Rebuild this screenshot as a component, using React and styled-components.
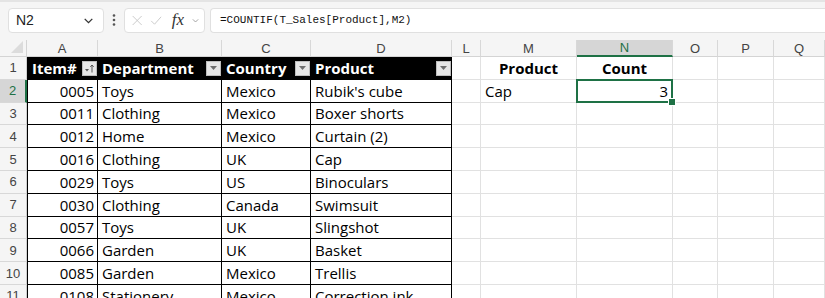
import styled, { createGlobalStyle } from "styled-components";

const GlobalStyle = createGlobalStyle`
  html, body { margin: 0; padding: 0; background: #fff; }
  body { font-family: "Open Sans", "Liberation Sans", sans-serif; overflow: hidden; }
`;

const GREEN = "#1e7145";

const Page = styled.div`
  width: 825px;
  height: 298px;
  overflow: hidden;
  background: #fff;
`;

const Toolbar = styled.div`
  height: 40px;
  box-sizing: border-box;
  background: #f5f5f5;
  border-top: 2px solid #e4e4e4;
  display: flex;
  align-items: center;
  padding: 0 0 2px 8px;
  gap: 5px;
`;

const Box = styled.div`
  height: 25px;
  box-sizing: border-box;
  background: #fff;
  border: 1px solid #e0e0e0;
  border-radius: 4px;
  display: flex;
  align-items: center;
`;

const NameBox = styled(Box)`
  width: 96px;
  padding: 0 8px 0 7px;
  justify-content: space-between;
  font-family: "Liberation Sans", sans-serif;
  font-size: 14px;
  color: #222;
`;

const Dots = styled.div`
  width: 10px;
  display: flex;
  justify-content: center;
  color: #555;
`;

const FxBox = styled(Box)`
  width: 81px;
  padding: 0 4px 0 6px;
  gap: 7px;
  color: #c6c6c6;
`;

const Fx = styled.span`
  font-family: "Liberation Serif", serif;
  font-style: italic;
  font-size: 17px;
  color: #333;
  margin-left: 2px;
`;

const FormulaBox = styled(Box)`
  flex: 1;
  border-right: none;
  border-radius: 4px 0 0 4px;
  padding-left: 9px;
  font-family: "Liberation Mono", monospace;
  font-size: 11px;
  color: #111;
`;

const Sheet = styled.div`
  display: grid;
  grid-template-columns: 27px 71px 124px 89px 141px 29px 96px 96px 45px 56px 51px;
  grid-template-rows: 17px repeat(11, 22.8px);
  font-size: 15px;
  color: #000;
`;

const Corner = styled.div`
  background: #f5f5f5;
  border-right: 1px solid #d4d4d4;
  border-bottom: 1px solid #d4d4d4;
  position: relative;
  &::after {
    content: "";
    position: absolute;
    right: 3px;
    bottom: 3px;
    border-left: 12px solid transparent;
    border-bottom: 12px solid #dcdcdc;
  }
`;

const ColHead = styled.div`
  background: ${(p) => (p.$active ? "#d6d6d6" : "#f5f5f5")};
  color: ${(p) => (p.$active ? GREEN : "#444")};
  border-right: 1px solid #d8d8d8;
  border-bottom: ${(p) => (p.$active ? `2px solid ${GREEN}` : "1px solid #d4d4d4")};
  box-sizing: border-box;
  font-family: "Liberation Sans", sans-serif;
  font-size: 13px;
  display: flex;
  align-items: center;
  justify-content: center;
`;

const RowHead = styled.div`
  background: ${(p) => (p.$active ? "#d6d6d6" : "#f5f5f5")};
  color: ${(p) => (p.$active ? GREEN : "#444")};
  border-right: ${(p) => (p.$active ? `2px solid ${GREEN}` : "1px solid #cfcfcf")};
  border-bottom: 1px solid #d8d8d8;
  box-sizing: border-box;
  font-family: "Liberation Sans", sans-serif;
  font-size: 13px;
  display: flex;
  align-items: center;
  justify-content: center;
`;

const Cell = styled.div`
  box-sizing: border-box;
  border-right: 1px solid #e1e1e1;
  border-bottom: 1px solid #e1e1e1;
  padding: 0 4px;
  display: flex;
  align-items: center;
  justify-content: ${(p) => p.$align || "flex-start"};
  font-weight: ${(p) => (p.$bold ? 700 : 400)};
  white-space: nowrap;
  overflow: hidden;
  position: relative;
`;

const ActiveCell = styled(Cell)`
  overflow: visible;
  &::after {
    content: "";
    position: absolute;
    left: -1px;
    top: -1px;
    right: -1px;
    bottom: -1px;
    border: 2px solid ${GREEN};
  }
  &::before {
    content: "";
    position: absolute;
    right: -4px;
    bottom: -4px;
    width: 6px;
    height: 6px;
    background: ${GREEN};
    border: 1px solid #fff;
    z-index: 2;
  }
`;

const TableHead = styled.div`
  box-sizing: border-box;
  background: #000;
  color: #fff;
  font-weight: 700;
  border-left: ${(p) => (p.$first ? "1px solid #000" : "none")};
  padding: 0 1px 0 4px;
  display: flex;
  align-items: center;
  justify-content: space-between;
  white-space: nowrap;
`;

const TableCell = styled.div`
  box-sizing: border-box;
  background: #fff;
  border-right: 1px solid #000;
  border-bottom: 1px solid #000;
  border-left: ${(p) => (p.$first ? "1px solid #000" : "none")};
  padding: 0 3px 0 4px;
  display: flex;
  align-items: center;
  justify-content: ${(p) => p.$align || "flex-start"};
  white-space: nowrap;
  overflow: hidden;
`;

const FilterBtn = styled.span`
  width: 15px;
  height: 15px;
  box-sizing: border-box;
  background: #e6e6e6;
  border: 1px solid #bdbdbd;
  display: flex;
  align-items: center;
  justify-content: center;
`;

const Chevron = ({ size = 12, color = "#444" }) => (
  <svg width={size} height={size} viewBox="0 0 12 12">
    <path d="M2.5 4.5 L6 8 L9.5 4.5" fill="none" stroke={color} strokeWidth="1.2" />
  </svg>
);

const Arrow = () => (
  <svg width="9" height="6" viewBox="0 0 9 6">
    <path d="M1 1 L8 1 L4.5 5 Z" fill="#6e6e6e" />
  </svg>
);

const SortIcon = () => (
  <svg width="11" height="11" viewBox="0 0 11 11">
    <path d="M1 6 L5 6 L3 8.5 Z" fill="#555" />
    <path d="M8 2 L8 9.5 M6.3 3.8 L8 2 L9.7 3.8" fill="none" stroke="#555" strokeWidth="1" />
  </svg>
);

const Filter = ({ sorted }) => <FilterBtn>{sorted ? <SortIcon /> : <Arrow />}</FilterBtn>;

const columns = ["A", "B", "C", "D", "L", "M", "N", "O", "P", "Q"];

const rows = [
  ["0005", "Toys", "Mexico", "Rubik's cube"],
  ["0011", "Clothing", "Mexico", "Boxer shorts"],
  ["0012", "Home", "Mexico", "Curtain (2)"],
  ["0016", "Clothing", "UK", "Cap"],
  ["0029", "Toys", "US", "Binoculars"],
  ["0030", "Clothing", "Canada", "Swimsuit"],
  ["0057", "Toys", "UK", "Slingshot"],
  ["0066", "Garden", "UK", "Basket"],
  ["0085", "Garden", "Mexico", "Trellis"],
  ["0108", "Stationery", "Mexico", "Correction ink"],
];

const headers = ["Item#", "Department", "Country", "Product"];

export default function App() {
  return (
    <Page>
      <GlobalStyle />
      <Toolbar>
        <NameBox>
          <span>N2</span>
          <Chevron size={13} color="#333" />
        </NameBox>
        <Dots>
          <svg width="4" height="14" viewBox="0 0 4 14">
            <circle cx="2" cy="2.5" r="1.3" fill="#555" />
            <circle cx="2" cy="7" r="1.3" fill="#555" />
            <circle cx="2" cy="11.5" r="1.3" fill="#555" />
          </svg>
        </Dots>
        <FxBox>
          <svg width="15" height="15" viewBox="0 0 15 15">
            <path d="M2 2 L13 13 M13 2 L2 13" stroke="#c6c6c6" strokeWidth="1.1" />
          </svg>
          <svg width="15" height="15" viewBox="0 0 15 15">
            <path d="M1.5 8 L5.5 12 L13.5 3" fill="none" stroke="#c6c6c6" strokeWidth="1.1" />
          </svg>
          <Fx>fx</Fx>
          <Chevron size={11} color="#999" />
        </FxBox>
        <FormulaBox>=COUNTIF(T_Sales[Product],M2)</FormulaBox>
      </Toolbar>

      <Sheet>
        <Corner />
        {columns.map((c) => (
          <ColHead key={c} $active={c === "N"}>
            {c}
          </ColHead>
        ))}

        <RowHead>1</RowHead>
        {headers.map((h, i) => (
          <TableHead key={h} $first={i === 0}>
            <span>{h}</span>
            <Filter sorted={i === 0} />
          </TableHead>
        ))}
        <Cell />
        <Cell $bold $align="center">Product</Cell>
        <Cell $bold $align="center">Count</Cell>
        <Cell />
        <Cell />
        <Cell />

        {rows.map((r, i) => {
          const n = i + 2;
          return [
            <RowHead key={`h${n}`} $active={n === 2}>
              {n}
            </RowHead>,
            <TableCell key={`a${n}`} $first $align="flex-end">
              {r[0]}
            </TableCell>,
            <TableCell key={`b${n}`}>{r[1]}</TableCell>,
            <TableCell key={`c${n}`}>{r[2]}</TableCell>,
            <TableCell key={`d${n}`}>{r[3]}</TableCell>,
            <Cell key={`l${n}`} />,
            <Cell key={`m${n}`}>{n === 2 ? "Cap" : ""}</Cell>,
            n === 2 ? (
              <ActiveCell key={`n${n}`} $align="flex-end">
                3
              </ActiveCell>
            ) : (
              <Cell key={`n${n}`} />
            ),
            <Cell key={`o${n}`} />,
            <Cell key={`p${n}`} />,
            <Cell key={`q${n}`} />,
          ];
        })}
      </Sheet>
    </Page>
  );
}
